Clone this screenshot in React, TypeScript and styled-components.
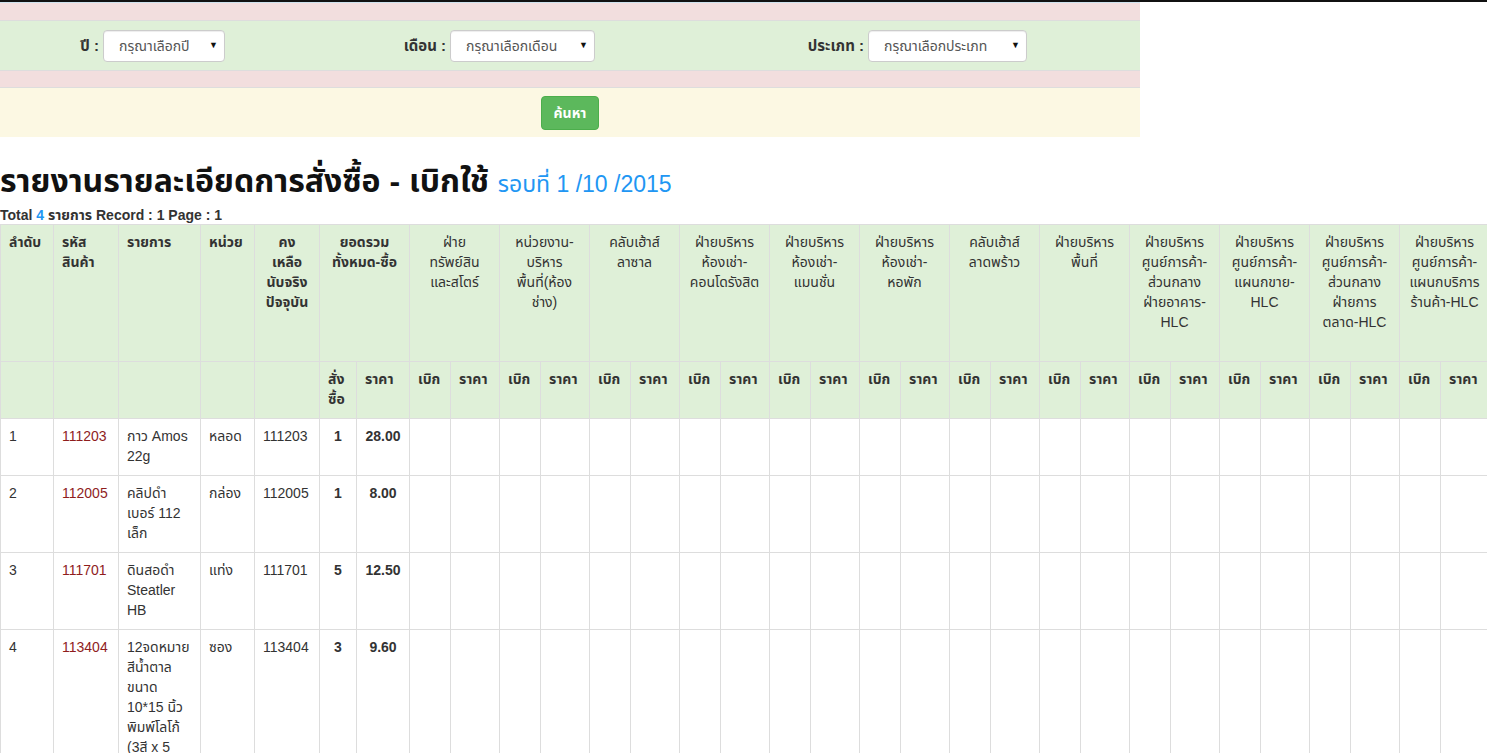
import React from 'react';
import styled, { createGlobalStyle } from 'styled-components';

const GlobalStyle = createGlobalStyle`
  html, body {
    overflow: hidden;
  }
  body {
    margin: 0;
    font-family: 'Liberation Sans', 'Noto Sans Thai', Tahoma, Arial, sans-serif;
    font-size: 14px;
    line-height: 1.42857;
    color: #333;
    background: #fff;
  }
`;

const Viewport = styled.div`
  width: 100vw;
  height: 100vh;
  overflow-x: scroll;
  overflow-y: hidden;
  &::-webkit-scrollbar {
    height: 4px;
  }
  &::-webkit-scrollbar-track {
    background: #f1f1f1;
  }
  &::-webkit-scrollbar-thumb {
    background: #a9a9a9;
  }
`;

const Page = styled.div`
  border-top: 2px solid #111;
  width: max-content;
`;

const Filter = styled.div`
  width: 1140px;
  border-top: 1px solid #cfe3ee;
`;

const Band = styled.div<{ $tone: 'danger' | 'success' | 'warning'; $tall?: boolean; $first?: boolean }>`
  background: ${(p) =>
    p.$tone === 'danger' ? '#f2dede' : p.$tone === 'success' ? '#dff0d8' : '#fcf8e3'};
  border-top: ${(p) => (p.$first ? 'none' : '1px solid #ddd')};
  min-height: ${(p) => (p.$tall ? '49px' : '17px')};
  box-sizing: border-box;
`;

const FieldRow = styled.div`
  display: grid;
  grid-template-columns: 99px 122px 217px 145px 265px 159px;
  column-gap: 4px;
  align-items: center;
  padding: 9px 0 8px;
`;

const Label = styled.label`
  text-align: right;
  font-weight: bold;
  font-size: 15px;
`;

const SelectWrap = styled.div`
  position: relative;
  height: 32px;
`;

const Select = styled.select`
  appearance: none;
  width: 100%;
  height: 32px;
  border: 1px solid #ccc;
  border-radius: 4px;
  background: #fff;
  padding: 0 20px 0 15px;
  font-family: inherit;
  font-size: 14px;
  color: #555;
  box-shadow: inset 0 1px 1px rgba(0, 0, 0, 0.075);
`;

const Caret = styled.span`
  position: absolute;
  right: 7px;
  top: 9px;
  font-size: 9px;
  color: #111;
  pointer-events: none;
`;

const ButtonRow = styled.div`
  display: flex;
  justify-content: center;
  padding: 8px 0 7px;
`;

const SearchButton = styled.button`
  height: 34px;
  padding: 0 12px;
  background: #5cb85c;
  border: 1px solid #4cae4c;
  border-radius: 4px;
  color: #fff;
  font-family: inherit;
  font-size: 14px;
  font-weight: bold;
`;

const Title = styled.h2`
  margin: 27px 0 8px;
  font-size: 32px;
  font-weight: bold;
  line-height: 1.1;
  color: #111;
`;

const Round = styled.small`
  font-size: 23px;
  font-weight: normal;
  color: #2196f3;
`;

const Summary = styled.div`
  font-size: 14px;
  font-weight: bold;
  line-height: 17px;
`;

const Blue = styled.span`
  color: #2196f3;
`;

const Table = styled.table`
  table-layout: fixed;
  border-collapse: collapse;
  border: 1px solid #ddd;
`;

const HeadRow = styled.tr<{ $height: number }>`
  height: ${(p) => p.$height}px;
  background: #dff0d8;
`;

const Th = styled.th<{ $center?: boolean; $bold?: boolean }>`
  border: 1px solid #ddd;
  padding: 8px;
  vertical-align: top;
  text-align: ${(p) => (p.$center ? 'center' : 'left')};
  font-weight: ${(p) => (p.$bold ? 'bold' : 'normal')};
  white-space: nowrap;
`;

const Td = styled.td<{ $center?: boolean; $bold?: boolean; $code?: boolean }>`
  border: 1px solid #ddd;
  padding: 8px;
  vertical-align: top;
  text-align: ${(p) => (p.$center ? 'center' : 'left')};
  font-weight: ${(p) => (p.$bold ? 'bold' : 'normal')};
  color: ${(p) => (p.$code ? '#8f1d1d' : '#333')};
  white-space: nowrap;
`;

const fixedCols = [53, 65, 82, 54, 65, 37, 53];

const groups: string[][] = [
  ['ฝ่าย', 'ทรัพย์สิน', 'และสโตร์'],
  ['หน่วยงาน-', 'บริหาร', 'พื้นที่(ห้อง', 'ช่าง)'],
  ['คลับเฮ้าส์', 'ลาซาล'],
  ['ฝ่ายบริหาร', 'ห้องเช่า-', 'คอนโดรังสิต'],
  ['ฝ่ายบริหาร', 'ห้องเช่า-', 'แมนชั่น'],
  ['ฝ่ายบริหาร', 'ห้องเช่า-', 'หอพัก'],
  ['คลับเฮ้าส์', 'ลาดพร้าว'],
  ['ฝ่ายบริหาร', 'พื้นที่'],
  ['ฝ่ายบริหาร', 'ศูนย์การค้า-', 'ส่วนกลาง', 'ฝ่ายอาคาร-', 'HLC'],
  ['ฝ่ายบริหาร', 'ศูนย์การค้า-', 'แผนกขาย-', 'HLC'],
  ['ฝ่ายบริหาร', 'ศูนย์การค้า-', 'ส่วนกลาง', 'ฝ่ายการ', 'ตลาด-HLC'],
  ['ฝ่ายบริหาร', 'ศูนย์การค้า-', 'แผนกบริการ', 'ร้านค้า-HLC'],
  ['ฝ่ายบริหาร', 'ศูนย์การค้า-', 'ส่วนกลาง', 'ฝ่ายบัญชี-', 'การเงิน-', 'HLC'],
  ['ฝ่ายบริหาร', 'ศูนย์การค้า-', 'ฝ่ายบุคคล-', 'HLC'],
  ['ฝ่ายบริหาร', 'ศูนย์การค้า-', 'แผนกช่าง-', 'HLC'],
  ['ฝ่ายบริหาร', 'ศูนย์การค้า-', 'แผนกรักษา', 'ความปลอดภัย-', 'HLC'],
  ['ฝ่ายบริหาร', 'ศูนย์การค้า-', 'แผนกแม่บ้าน-', 'HLC'],
  ['ฝ่ายบริหาร', 'ศูนย์การค้า-', 'แผนกจอดรถ-', 'HLC'],
  ['ฝ่ายบัญชี'],
  ['ฝ่ายการเงิน'],
  ['ฝ่ายบุคคล'],
  ['ฝ่ายจัดซื้อ'],
  ['ฝ่ายเทคโนโลยี', 'สารสนเทศ'],
  ['สำนักงาน', 'กรรมการ'],
];

type Item = {
  no: string;
  code: string;
  name: string[];
  unit: string;
  stock: string;
  qty: string;
  price: string;
};

const items: Item[] = [
  { no: '1', code: '111203', name: ['กาว Amos', '22g'], unit: 'หลอด', stock: '111203', qty: '1', price: '28.00' },
  { no: '2', code: '112005', name: ['คลิปดำ', 'เบอร์ 112', 'เล็ก'], unit: 'กล่อง', stock: '112005', qty: '1', price: '8.00' },
  { no: '3', code: '111701', name: ['ดินสอดำ', 'Steatler', 'HB'], unit: 'แท่ง', stock: '111701', qty: '5', price: '12.50' },
  {
    no: '4',
    code: '113404',
    name: ['12จดหมาย', 'สีน้ำตาล', 'ขนาด', '10*15 นิ้ว', 'พิมพ์โลโก้', '(3สี x 5', 'ชิ้น)'],
    unit: 'ซอง',
    stock: '113404',
    qty: '3',
    price: '9.60',
  },
];

const Lines = ({ lines }: { lines: string[] }) => (
  <>
    {lines.map((l, i) => (
      <React.Fragment key={i}>
        {i > 0 && <br />}
        {l}
      </React.Fragment>
    ))}
  </>
);

const Field = ({ label, placeholder }: { label: string; placeholder: string }) => (
  <>
    <Label>{label}</Label>
    <SelectWrap>
      <Select defaultValue="">
        <option value="">{placeholder}</option>
      </Select>
      <Caret>▼</Caret>
    </SelectWrap>
  </>
);

export default function App() {
  return (
    <Viewport>
      <GlobalStyle />
      <Page>
        <Filter>
          <Band $tone="danger" $first />
          <Band $tone="success" $tall>
            <FieldRow>
              <Field label="ปี :" placeholder="กรุณาเลือกปี" />
              <Field label="เดือน :" placeholder="กรุณาเลือกเดือน" />
              <Field label="ประเภท :" placeholder="กรุณาเลือกประเภท" />
            </FieldRow>
          </Band>
          <Band $tone="danger" />
          <Band $tone="warning" $tall>
            <ButtonRow>
              <SearchButton>ค้นหา</SearchButton>
            </ButtonRow>
          </Band>
        </Filter>

        <Title>
          รายงานรายละเอียดการสั่งซื้อ - เบิกใช้ <Round>รอบที่ 1 /10 /2015</Round>
        </Title>
        <Summary>
          Total <Blue>4</Blue> รายการ Record : 1 Page : 1
        </Summary>

        <Table>
          <colgroup>
            {fixedCols.map((w, i) => (
              <col key={i} style={{ width: w }} />
            ))}
            {groups.map((_, i) => (
              <React.Fragment key={i}>
                <col style={{ width: 41 }} />
                <col style={{ width: 49 }} />
              </React.Fragment>
            ))}
            <col style={{ width: 48 }} />
          </colgroup>
          <thead>
            <HeadRow $height={137}>
              <Th $bold>ลำดับ</Th>
              <Th $bold>
                <Lines lines={['รหัส', 'สินค้า']} />
              </Th>
              <Th $bold>รายการ</Th>
              <Th $bold>หน่วย</Th>
              <Th $bold $center>
                <Lines lines={['คง', 'เหลือ', 'นับจริง', 'ปัจจุบัน']} />
              </Th>
              <Th $bold $center colSpan={2}>
                <Lines lines={['ยอดรวม', 'ทั้งหมด-ซื้อ']} />
              </Th>
              {groups.map((g, i) => (
                <Th key={i} $center colSpan={2}>
                  <Lines lines={g} />
                </Th>
              ))}
              <Th $bold $center>
                <Lines lines={['รวม', 'เบิก']} />
              </Th>
            </HeadRow>
            <HeadRow $height={57}>
              <Th />
              <Th />
              <Th />
              <Th />
              <Th />
              <Th $bold>
                <Lines lines={['สั่ง', 'ซื้อ']} />
              </Th>
              <Th $bold>ราคา</Th>
              {groups.map((_, i) => (
                <React.Fragment key={i}>
                  <Th $bold>เบิก</Th>
                  <Th $bold>ราคา</Th>
                </React.Fragment>
              ))}
              <Th />
            </HeadRow>
          </thead>
          <tbody>
            {items.map((it) => (
              <tr key={it.no}>
                <Td>{it.no}</Td>
                <Td $code>{it.code}</Td>
                <Td>
                  <Lines lines={it.name} />
                </Td>
                <Td>{it.unit}</Td>
                <Td>{it.stock}</Td>
                <Td $bold $center>
                  {it.qty}
                </Td>
                <Td $bold $center>
                  {it.price}
                </Td>
                {groups.map((_, i) => (
                  <React.Fragment key={i}>
                    <Td />
                    <Td />
                  </React.Fragment>
                ))}
                <Td />
              </tr>
            ))}
          </tbody>
        </Table>
      </Page>
    </Viewport>
  );
}
